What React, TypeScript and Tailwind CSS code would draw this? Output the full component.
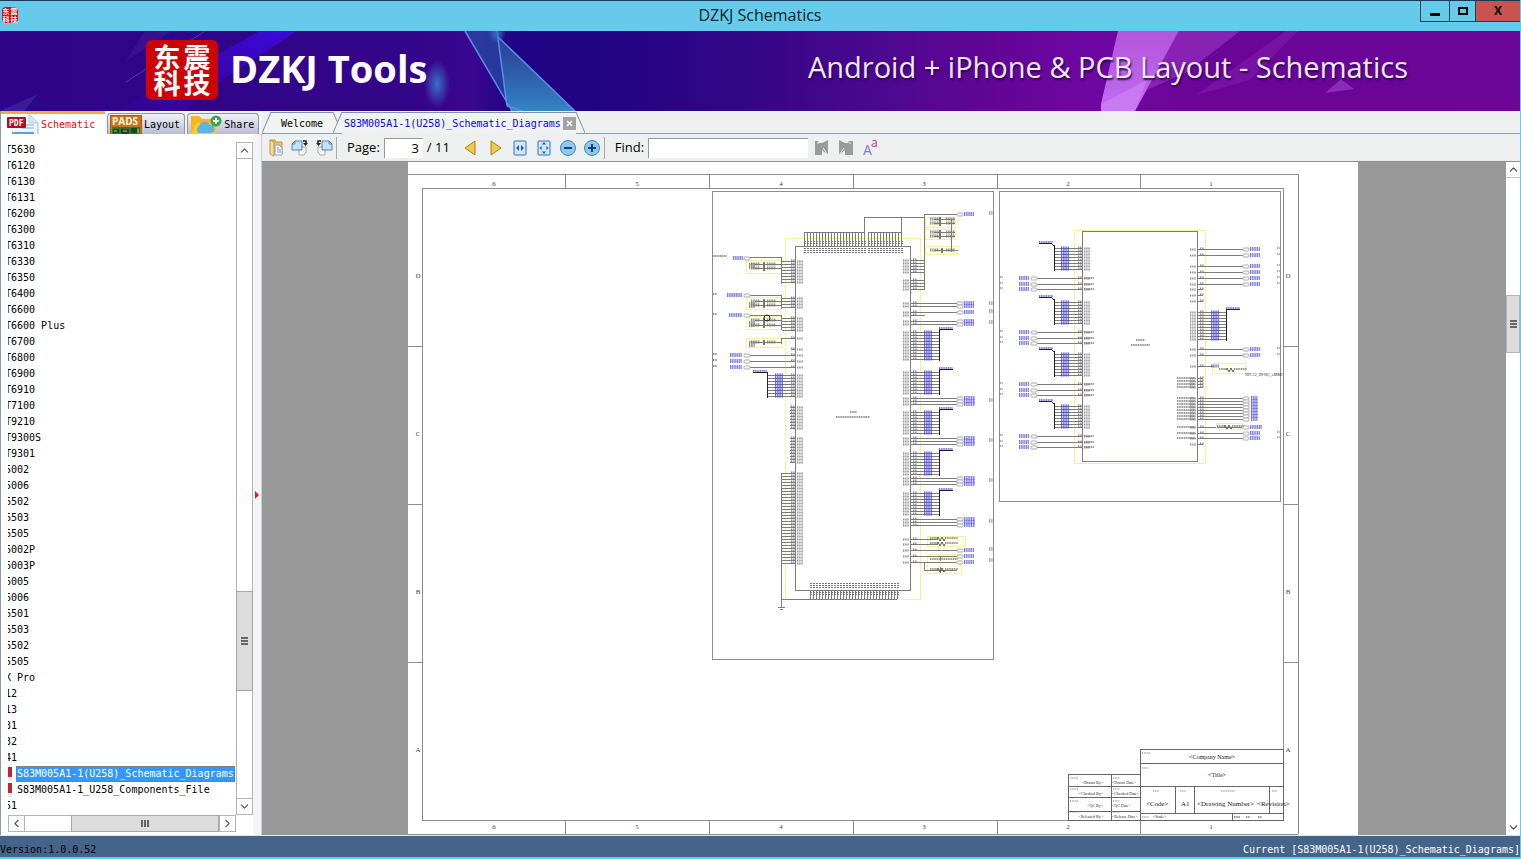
import { useState } from 'react'
import type { ReactNode } from 'react'
import { ChevronDown, ChevronLeft, ChevronRight, ChevronUp } from 'lucide-react'

type TreeRow = { label: string; file?: boolean }

const folders = [
  'T5630', 'T6120', 'T6130', 'T6131', 'T6200', 'T6300', 'T6310', 'T6330', 'T6350', 'T6400', 'T6600',
  'T6600 Plus', 'T6700', 'T6800', 'T6900', 'T6910', 'T7100', 'T9210', 'T9300S', 'T9301', '5002', '5006',
  '6502', '6503', '6505', '6002P', '6003P', '6005', '6006', '6501', '6503', '6502', '5505', 'X Pro', '12',
  '13', '31', '32', '41',
]

const rows: TreeRow[] = [
  ...folders.map((label) => ({ label })),
  { label: 'S83M005A1-1(U258)_Schematic_Diagrams', file: true },
  { label: 'S83M005A1-1_U258_Components_File', file: true },
  { label: '51' },
]

const range = (from: number, count: number, step = 3) =>
  Array.from({ length: count }, (_, i) => from + i * step)

/* ---------- title bar and banner ---------- */

function TitleBar() {
  return (
    <header className="flex h-[31px] shrink-0 items-start border-t border-[#173a56] bg-[#66cbea]">
      <div className="flex w-[100px] items-center pt-1.5 pl-0.5">
        <span className="grid h-4 w-4 grid-cols-2 place-items-center rounded-sm bg-[#c80d10] font-['Noto_Sans_CJK_SC',sans-serif] text-[7px] leading-[8px] font-bold text-white">
          <span>东</span>
          <span>震</span>
          <span>科</span>
          <span>技</span>
        </span>
      </div>
      <h1 className="flex-1 text-center text-base leading-[29px] text-[#10242e]">DZKJ Schematics</h1>
      <div className="flex h-[21px] w-[100px] border-b border-l border-[#1d4256]">
        <button aria-label="Minimize" className="flex w-[29px] items-center justify-center border-r border-[#1d4256] pt-1.5">
          <span className="h-[3px] w-2.5 bg-black" />
        </button>
        <button aria-label="Maximize" className="flex w-[26px] items-center justify-center border-r border-[#1d4256]">
          <span className="h-2 w-2.5 border-2 border-black" />
        </button>
        <button aria-label="Close" className="flex-1 bg-[#c9534f] text-xs font-bold text-black">
          X
        </button>
      </div>
    </header>
  )
}

function Banner() {
  return (
    <div className="relative h-20 shrink-0 overflow-hidden bg-[#6a0597]">
      <svg className="absolute inset-0 h-full w-full" viewBox="0 31 1520 80" preserveAspectRatio="none" aria-hidden="true">
        <defs>
          <linearGradient id="sky" x1="0" x2="1">
            <stop offset="0" stopColor="#2e0488" />
            <stop offset="0.27" stopColor="#330589" />
            <stop offset="0.31" stopColor="#3a0790" />
            <stop offset="0.34" stopColor="#1e0484" />
            <stop offset="0.4" stopColor="#220484" />
            <stop offset="0.5" stopColor="#360688" />
            <stop offset="0.58" stopColor="#4c0890" />
            <stop offset="0.66" stopColor="#640597" />
            <stop offset="0.72" stopColor="#7006a2" />
            <stop offset="0.8" stopColor="#6a0597" />
            <stop offset="1" stopColor="#6b0699" />
          </linearGradient>
          <linearGradient id="beam" x1="1" y1="0" x2="0" y2="1">
            <stop offset="0" stopColor="#3d07e2" />
            <stop offset="1" stopColor="#3a06a0" stopOpacity="0.3" />
          </linearGradient>
          <linearGradient id="shard" x1="0" y1="0" x2="0" y2="1">
            <stop offset="0" stopColor="#2c4a9c" stopOpacity="0.8" />
            <stop offset="1" stopColor="#3485c4" />
          </linearGradient>
          <linearGradient id="pink" x1="0" y1="0" x2="0" y2="1">
            <stop offset="0" stopColor="#b455da" />
            <stop offset="1" stopColor="#c06cf0" />
          </linearGradient>
          <radialGradient id="glow">
            <stop offset="0" stopColor="#3a70c8" />
            <stop offset="1" stopColor="#3a70c8" stopOpacity="0" />
          </radialGradient>
        </defs>
        <rect y="31" width="1520" height="80" fill="url(#sky)" />
        <path d="M260 31H297L208 89L185 111H116Z" fill="url(#beam)" />
        <path d="M145 31H172L126 61Z" fill="#421896" opacity="0.6" />
        <path d="M205 31L126 82" stroke="#6552c4" strokeWidth="1" opacity="0.7" />
        <path d="M0 111L38 94L24 111Z" fill="#4b5bc0" opacity="0.3" />
        <ellipse cx="437" cy="84" rx="13" ry="24" fill="url(#glow)" />
        <path d="M465 31H497L505 97Z" fill="#284fa5" opacity="0.7" />
        <path d="M498 37L575 111H512L505 97Z" fill="url(#shard)" />
        <path d="M465 31L512 111M497 31L507 106M498 37L575 111M507 106L522 111" fill="none" stroke="#5a8fe0" strokeWidth="1.5" />
        <circle cx="497" cy="34" r="9" fill="url(#glow)" />
        <path d="M1118 31H1179L1135 111H1101V104Z" fill="url(#pink)" />
        <path d="M1101 104L1147 80L1135 111H1101Z" fill="#cf86f8" opacity="0.6" />
        <path d="M1178 31H1240L1187 72L1147 90Z" fill="#9c36c4" opacity="0.6" />
        <path d="M1286 31H1298L1250 80L1196 95Z" fill="#8f2cba" opacity="0.35" />
        <path d="M1341 79L1354 89L1325 93Z" fill="#a345cc" opacity="0.6" />
      </svg>
      <div className="relative flex h-full items-center pr-28 pb-0.5 pl-[146px]">
        <div className="grid h-[60px] w-[72px] grid-cols-[28px_28px] content-center justify-center gap-x-0.5 rounded-md bg-[#cc0406] text-center font-['Noto_Sans_CJK_SC',sans-serif] text-[27px] leading-[26px] font-bold text-white">
          <span>东</span>
          <span>震</span>
          <span>科</span>
          <span>技</span>
        </div>
        <p className="ml-3 flex-1 pb-1 text-[38px] leading-none font-bold whitespace-nowrap text-white">DZKJ Tools</p>
        <p className="pb-2 text-[29px] leading-none whitespace-nowrap text-[#f0e8f8] [text-shadow:1px_2px_2px_#2a0450]">
          Android + iPhone &amp; PCB Layout - Schematics
        </p>
      </div>
    </div>
  )
}

/* ---------- scrollbars ---------- */

const scrollButton = 'flex h-[17px] w-[17px] shrink-0 items-center justify-center border border-[#b4b4b4] bg-[#fdfdfd] text-[#555]'

function Grip({ vertical }: { vertical?: boolean }) {
  const bar = vertical ? 'h-0.5 w-[7px] bg-[#666]' : 'h-[7px] w-0.5 bg-[#666]'
  return (
    <span className={vertical ? 'flex flex-col gap-px' : 'flex gap-px'}>
      <span className={bar} />
      <span className={bar} />
      <span className={bar} />
    </span>
  )
}

function TreeScrollY() {
  return (
    <div className="flex w-[17px] flex-col bg-white">
      <button aria-label="Scroll list up" className={scrollButton}>
        <ChevronUp size={13} />
      </button>
      <div className="flex-[433] border-x border-[#b4b4b4]" />
      <div className="flex h-[100px] items-center justify-center border border-[#a6a6a6] bg-[#dcdcdc]">
        <Grip vertical />
      </div>
      <div className="flex-[107] border-x border-[#b4b4b4]" />
      <button aria-label="Scroll list down" className={scrollButton}>
        <ChevronDown size={13} />
      </button>
    </div>
  )
}

function TreeScrollX() {
  return (
    <div className="mr-[26px] flex h-[17px] bg-white">
      <button aria-label="Scroll list left" className={scrollButton}>
        <ChevronLeft size={13} />
      </button>
      <div className="flex-1 border-y border-[#b4b4b4]" />
      <div className="flex w-[148px] items-center justify-center border border-[#a6a6a6] bg-[#dcdcdc]">
        <Grip />
      </div>
      <button aria-label="Scroll list right" className={scrollButton}>
        <ChevronRight size={13} />
      </button>
    </div>
  )
}

/* ---------- left side ---------- */

function PdfIcon() {
  return (
    <svg width="32" height="20" viewBox="0 0 32 20" aria-hidden="true">
      <path d="M5 1h17l9 8v11H5z" fill="#eef5fb" />
      <path d="M22 1l9 8v11" fill="none" stroke="#a9c4dc" strokeWidth="1.2" />
      <path d="M22 1v8h9" fill="#d5e6f4" stroke="#b7cfe2" />
      <path d="M14 11h13M14 14h13" stroke="#b3d4ec" strokeWidth="2" />
      <path d="M5 19h22" stroke="#5ba3d4" strokeWidth="2" />
      <rect x="0" y="3" width="19" height="11" rx="1" fill="#b40d1e" />
      <text x="2" y="12" fontSize="8" fontWeight="700" fill="#fff">PDF</text>
    </svg>
  )
}

function PadsIcon() {
  return (
    <svg width="32" height="19" viewBox="0 0 32 19" className="font-['Open_Sans',sans-serif]" aria-hidden="true">
      <rect width="32" height="19" fill="#b5570f" />
      <rect x="1" y="1" width="30" height="18" fill="#c9721c" />
      <text x="2" y="10" fontSize="10" fontWeight="700" fill="#fff6d8">PADS</text>
      <rect x="2" y="12" width="28" height="7" fill="#2e7a2c" />
      <path d="M3 14h6v4H3zM21 13h6v5h-6z" fill="#154a1c" />
      <path d="M11 14h8v5h-8z" fill="#333" />
      <path d="M13 16h4M28 14v4M4 16h3" stroke="#a6d36a" />
    </svg>
  )
}

function ShareIcon() {
  return (
    <svg width="32" height="19" viewBox="0 0 32 19" aria-hidden="true">
      <path d="M1 1h8l3 3h12v15H1z" fill="#f7b51f" />
      <path d="M6 8h22l-3 11H1z" fill="#ffc928" />
      <path d="M9 18a4 4 0 0 1 0-7a6 6 0 0 1 11-1a4 4 0 0 1 1 8z" fill="#5fb3e6" />
      <circle cx="26" cy="6" r="5.5" fill="#3aa546" />
      <path d="M26 3v6M23 6h6" stroke="#fff" strokeWidth="1.8" />
    </svg>
  )
}

function SideTab({ icon, label, active, onClick }: { icon: ReactNode; label: string; active: boolean; onClick: () => void }) {
  return (
    <button
      role="tab"
      aria-selected={active}
      onClick={onClick}
      className={`flex items-end overflow-hidden whitespace-nowrap ${
        active
          ? 'h-[23px] w-[104px] gap-0.5 border-t-[3px] border-[#f9a83a] bg-white pl-1.5 text-[#e01010]'
          : 'h-[21px] gap-0.5 rounded-t-sm border border-b-0 border-[#8d93a8] bg-gradient-to-b from-[#f2f3f9] to-[#b9bdd4] pr-1 pl-0.5 text-black'
      }`}
    >
      {icon}
      <span className="pb-px leading-4">{label}</span>
    </button>
  )
}

function Sidebar() {
  const [tab, setTab] = useState('Schematic')
  const [selected, setSelected] = useState(rows.length - 3)

  return (
    <aside className="flex w-[262px] shrink-0 flex-col border-l border-[#8c9aa8] bg-white">
      <div role="tablist" className="flex h-[23px] shrink-0 items-end gap-0.5 bg-[#f4f5f6]">
        <SideTab icon={<PdfIcon />} label="Schematic" active={tab === 'Schematic'} onClick={() => setTab('Schematic')} />
        <SideTab icon={<PadsIcon />} label="Layout" active={tab === 'Layout'} onClick={() => setTab('Layout')} />
        <SideTab icon={<ShareIcon />} label="Share" active={tab === 'Share'} onClick={() => setTab('Share')} />
      </div>
      <div className="flex min-h-0 flex-1">
        <div className="flex min-h-0 flex-1 flex-col pt-2 pb-[3px] pl-[7px]">
          <div className="flex min-h-0 flex-1">
            <ul className="min-w-0 flex-1 overflow-hidden">
              {rows.map((row, i) => (
                <li key={i} className="h-4">
                  {row.file ? (
                    <button onClick={() => setSelected(i)} className="flex h-4 items-center gap-1 whitespace-nowrap">
                      <span className="h-3.5 w-1 shrink-0 border-b-4 border-[#d5ebfa] bg-[#c22432]" />
                      <span
                        className={`h-4 border border-dotted leading-[14px] ${
                          selected === i ? 'border-[#cc6600] bg-[#3397fd] text-white' : 'border-transparent'
                        }`}
                      >
                        {row.label}
                      </span>
                    </button>
                  ) : (
                    // the list is scrolled right, so the first character is cut in half
                    <button
                      onClick={() => setSelected(i)}
                      className={`-ml-[3px] block leading-4 whitespace-nowrap ${selected === i ? 'bg-[#3397fd] text-white' : ''}`}
                    >
                      {row.label}
                    </button>
                  )}
                </li>
              ))}
            </ul>
            <TreeScrollY />
            <span className="w-[9px] shrink-0" />
          </div>
          <TreeScrollX />
        </div>
        <div className="-ml-[9px] flex w-[9px] items-center border-r border-[#c6ccd2] bg-[#f3f4f5] pt-5 pl-0.5">
          <span className="border-y-4 border-l-4 border-y-transparent border-l-[#e01818]" />
        </div>
      </div>
    </aside>
  )
}

/* ---------- document tabs and toolbar ---------- */

function Slant({ right }: { right?: boolean }) {
  return (
    <svg width="9" height="21" viewBox="0 0 9 21" className="shrink-0" aria-hidden="true">
      <path d={right ? 'M0 0L9 21H0Z' : 'M9 0L0 21H9Z'} fill="#f1f2f2" />
      <path d={right ? 'M0 0L9 21' : 'M9 0L0 21'} stroke="#7d929f" />
    </svg>
  )
}

function DocTabs() {
  return (
    <div role="tablist" className="flex h-[23px] items-end border-b border-[#8ba0ae] bg-[#eeefef]">
      <div className="flex">
        <Slant />
        <button role="tab" aria-selected={false} className="h-[21px] w-[62px] border-t border-[#7d929f] bg-[#f1f2f2] pt-px leading-5">
          Welcome
        </button>
        <Slant right />
      </div>
      <div className="-ml-[9px] flex">
        <Slant />
        <div className="-mb-px flex h-[22px] items-center gap-0.5 border-t border-[#7d929f] bg-[#f1f2f2] pl-0.5">
          <button role="tab" aria-selected={true} className="leading-5 whitespace-nowrap text-[#0808d8]">
            S83M005A1-1(U258)_Schematic_Diagrams
          </button>
          <button aria-label="Close tab" className="flex h-[13px] w-[13px] items-center justify-center bg-[#a2a2a2]">
            <svg width="7" height="7" viewBox="0 0 7 7" aria-hidden="true">
              <path d="M1 1l5 5M6 1l-5 5" stroke="#fff" strokeWidth="1.6" />
            </svg>
          </button>
        </div>
        <Slant right />
      </div>
    </div>
  )
}

function Tool({ label, width, children }: { label: string; width: number; children: ReactNode }) {
  return (
    <button aria-label={label} className="flex h-6 w-6 shrink-0 items-center justify-center">
      <svg width={width} height="18" viewBox={`0 0 ${width} 18`} aria-hidden="true">
        {children}
      </svg>
    </button>
  )
}

function Toolbar() {
  const [page, setPage] = useState('3')
  const [query, setQuery] = useState('')

  return (
    <div className="flex h-7 shrink-0 items-center border-b border-[#8e8e8e] bg-[#eeefef] pl-0.5 text-[13px] text-black">
      <Tool label="Open" width={16}>
        <path d="M2 1h5l1 2h6v12H4z" fill="#e9bf62" stroke="#c4963e" />
        <path d="M2 1l4 2v14l-4-2z" fill="#f8dc94" stroke="#c4963e" />
        <path d="M7 6h4l3 3v7H7z" fill="#f5f9fd" stroke="#8aa8c4" />
        <path d="M9 9h2M9 11h4M9 13h4" stroke="#7f9fc0" />
      </Tool>
      <Tool label="Rotate left" width={18}>
        <path d="M8 8h7v5l-2 3H8z" fill="#f8f8f8" stroke="#aaa" />
        <path d="M4 2h7v9H1V5z" fill="#c5e0f8" stroke="#5286b8" />
        <path d="M4 2v3H1" fill="none" stroke="#5286b8" />
        <path d="M12 2h3v2" fill="none" stroke="#222" strokeWidth="1.4" />
        <path d="M12 4h5l-2.500 3z" fill="#222" />
      </Tool>
      <Tool label="Rotate right" width={18}>
        <path d="M3 8h7v8H5l-2-3z" fill="#f8f8f8" stroke="#aaa" />
        <path d="M7 2h7l3 3v6H7z" fill="#c5e0f8" stroke="#5286b8" />
        <path d="M14 2v3h3" fill="none" stroke="#5286b8" />
        <path d="M6 2H3v2" fill="none" stroke="#222" strokeWidth="1.4" />
        <path d="M1 4h5L3.500 7z" fill="#222" />
      </Tool>
      <span className="mr-2.5 h-[22px] w-px bg-[#a8a8a8]" />
      <label htmlFor="page">Page:</label>
      <input
        id="page"
        value={page}
        onChange={(e) => setPage(e.target.value)}
        className="ml-1 h-5 w-[39px] border-t border-l border-[#999] bg-white pr-1 text-right outline-none"
      />
      <span className="mx-1 whitespace-nowrap">/ 11</span>
      <span className="w-1" />
      <Tool label="Previous page" width={14}>
        <path d="M12 2v14L2 9z" fill="#f3c94c" stroke="#a87f1c" />
      </Tool>
      <span className="w-0.5" />
      <Tool label="Next page" width={14}>
        <path d="M2 2v14l10-7z" fill="#f3c94c" stroke="#a87f1c" />
      </Tool>
      <Tool label="Fit width" width={14}>
        <rect x="1" y="2" width="12" height="14" rx="1" fill="#cfe6fb" stroke="#2c74bc" />
        <path d="M6 6v6L3 9zM8 6v6l3-3z" fill="#1c5fa8" />
      </Tool>
      <Tool label="Fit page" width={14}>
        <rect x="1" y="2" width="12" height="14" rx="1" fill="#cfe6fb" stroke="#2c74bc" />
        <path d="M7 3l2 2.500H5zM7 15l2-2.500H5zM2.500 9l2-2v4zM11.500 9l-2-2v4z" fill="#1c5fa8" />
      </Tool>
      <Tool label="Zoom out" width={18}>
        <circle cx="9" cy="9" r="7.500" fill="#8ccaf2" stroke="#3f83b8" />
        <path d="M5 9h8" stroke="#123f70" strokeWidth="2" />
      </Tool>
      <Tool label="Zoom in" width={18}>
        <circle cx="9" cy="9" r="7.500" fill="#8ccaf2" stroke="#3f83b8" />
        <path d="M5 9h8M9 5v8" stroke="#123f70" strokeWidth="2" />
      </Tool>
      <span className="mr-2.5 h-[22px] w-px bg-[#a8a8a8]" />
      <label htmlFor="find">Find:</label>
      <input
        id="find"
        value={query}
        onChange={(e) => setQuery(e.target.value)}
        className="mr-0.5 ml-1 h-5 w-40 border-t border-l border-[#999] bg-white px-1 outline-none"
      />
      <Tool label="Find previous" width={16}>
        <path d="M1 2h3l1 2h3l6-3v15l-6-5v5H1z" fill="#9b9b9b" />
        <path d="M9 9l5 7M3 4h2" stroke="#eee" />
      </Tool>
      <Tool label="Find next" width={16}>
        <path d="M1 1l6 3h3l1-2h4v14H7v-5l-6 5z" fill="#9b9b9b" />
        <path d="M6 9l-5 7M11 4h2" stroke="#eee" />
      </Tool>
      <Tool label="Match case" width={16}>
        <text x="1" y="16" fontSize="14" fill="#7a78ea">A</text>
        <text x="9" y="8" fontSize="12" fill="#c02a9c">a</text>
      </Tool>
    </div>
  )
}

/* ---------- schematic sheet ---------- */

const WIRE = '#7c7c7c'
const BLUE = '#5a5ae0'
const YELLOW = '#f6f29a'

// labels are too small to read at this zoom, so they are drawn as broken bars
function Bar({ x, y, w, h = 3, color = '#777' }: { x: number; y: number; w: number; h?: number; color?: string }) {
  return (
    <g stroke={color} shapeRendering="auto">
      <path d={`M${x} ${y}h${w}`} strokeWidth={h} opacity="0.3" />
      <path d={`M${x} ${y}h${w}`} strokeWidth={h} strokeDasharray="1 1.300" opacity="0.7" />
    </g>
  )
}

function Port({ x, y, label, width = 10 }: { x: number; y: number; label: number; width?: number }) {
  return (
    <g>
      <rect x={x} y={y - 1} width="6" height="3" rx="1" fill="#fff" stroke="#aaa" shapeRendering="auto" />
      <Bar x={label} y={y} w={width} h={4} color={BLUE} />
    </g>
  )
}

// dir 1: pins leave the part to the right, -1: to the left
function Pins({ x, ys, len = 14, dir }: { x: number; ys: number[]; len?: number; dir: 1 | -1 }) {
  return (
    <g>
      {ys.map((y) => (
        <g key={y}>
          <path d={`M${x} ${y + 0.5}h${len * dir}`} stroke={WIRE} />
          <Bar x={dir === 1 ? x - 8 : x + 1} y={y + 0.5} w={6} h={2} />
          <Bar x={dir === 1 ? x + 2 : x - 5} y={y - 0.5} w={4} h={2} />
        </g>
      ))}
    </g>
  )
}

function Bus({ edge, x, y, count, dir }: { edge: number; x: number; y: number; count: number; dir: 1 | -1 }) {
  const ys = range(y + 3, count)
  const far = dir === 1 ? x : x - 14
  return (
    <g>
      <Pins x={edge} ys={ys} len={Math.abs(x - edge)} dir={dir} />
      <path d={`M${x + 14 * dir} ${y + 0.5}H${x + 0.5}V${y + count * 3 + 2}`} fill="none" stroke="#222" />
      <Bar x={far} y={y - 1} w={14} h={2} color={BLUE} />
      {ys.map((v) => (
        <Bar key={v} x={dir === 1 ? x - 15 : x + 8} y={v} w={8} h={3} color="#4444dc" />
      ))}
    </g>
  )
}

function Filter({ x, y, w, h, lines }: { x: number; y: number; w: number; h: number; lines: number[] }) {
  return (
    <g>
      <rect x={x + 0.5} y={y + 0.5} width={w} height={h} fill="#fffef0" stroke={YELLOW} />
      {lines.map((v) => (
        <g key={v}>
          <path d={`M${x + 9} ${v + 0.5}H${x + w}`} stroke={WIRE} />
          <Bar x={x + 5} y={v} w={9} h={3} />
          <Bar x={x + 21} y={v} w={9} h={3} />
          <path d={`M${x + w / 2} ${v - 2}v5`} stroke="#777" strokeWidth="2" />
        </g>
      ))}
    </g>
  )
}

function Resistor({ x, y }: { x: number; y: number }) {
  return (
    <g>
      <Bar x={x - 9} y={y - 1} w={7} h={2} />
      <path d={`M${x - 2} ${y}l1 -2l2 4l2 -4l2 4l1 -2`} fill="none" stroke="#555" shapeRendering="auto" />
      <Bar x={x + 6} y={y - 1} w={13} h={2} />
    </g>
  )
}

function SheetFrame() {
  const columns = [494, 637, 781, 924, 1068, 1211]
  const lines = [
    { y: 275, name: 'D' },
    { y: 433, name: 'C' },
    { y: 591, name: 'B' },
    { y: 749, name: 'A' },
  ]
  return (
    <g>
      <g fill="none" stroke="#8c8c8c">
        <path d="M408 174.500H1298.500V834" />
        <rect x="422.500" y="188.500" width="861" height="632" />
        {[565, 709, 853, 997, 1140].map((x) => (
          <path key={x} d={`M${x + 0.5} 175V188M${x + 0.5} 821V834`} />
        ))}
        {[346, 504, 662].map((y) => (
          <path key={y} d={`M408 ${y + 0.5}H422M1284 ${y + 0.5}H1298`} />
        ))}
        <path d="M408 834.500H1298" />
        <rect x="712.500" y="191.500" width="281" height="468" />
        <rect x="999.500" y="191.500" width="281" height="310" />
      </g>
      <g fill="#444" fontSize="7" textAnchor="middle" className="font-['Liberation_Serif',serif]">
        {columns.map((x, i) => (
          <g key={x}>
            <text x={x} y="186">{6 - i}</text>
            <text x={x} y="829">{6 - i}</text>
          </g>
        ))}
        {lines.map(({ y, name }) => (
          <g key={name}>
            <text x="418" y={y + 3}>{name}</text>
            <text x="1288" y={y + 3}>{name}</text>
          </g>
        ))}
      </g>
    </g>
  )
}

function MainChip() {
  return (
    <g>
      <rect x="785.500" y="238.500" width="135" height="361" fill="none" stroke={YELLOW} />
      <rect x="795.500" y="246.500" width="115" height="344" fill="none" stroke={WIRE} />

      {/* top row */}
      {[...range(804, 21), ...range(868, 12)].map((x) => (
        <g key={x}>
          <path d={`M${x + 0.5} 232V246`} stroke={WIRE} />
          <path d={`M${x + 0.5} 248v5M${x + 0.5} 241v4`} stroke="#777" strokeWidth="2" strokeDasharray="1 1" />
        </g>
      ))}
      <path d="M804 232.500H864.500V217.500H924M868 232.500H901.500V217.500M957 214.500H924.500V289" fill="none" stroke={WIRE} />

      {/* bottom row */}
      {range(810, 30).map((x) => (
        <g key={x}>
          <path d={`M${x + 0.5} 590V599`} stroke={WIRE} />
          <path d={`M${x + 0.5} 583v6M${x + 0.5} 592v4`} stroke="#777" strokeWidth="2" strokeDasharray="1 1" />
        </g>
      ))}
      <path d="M781 599.500H897M781.500 473V607M778 607.500h7M780 609.500h3" fill="none" stroke={WIRE} />

      {/* left side */}
      <Filter x={746} y={260} w={35} h={13} lines={[264, 268]} />
      <Filter x={746} y={297} w={35} h={12} lines={[301, 305]} />
      <Filter x={746} y={316} w={35} h={13} lines={[320, 325]} />
      <Filter x={746} y={338} w={35} h={9} lines={[342]} />
      <path d="M750 257.500H781.500V284M750 295.500H781.500V309M750 315.500H781.500V330M781.500 338V344" fill="none" stroke={WIRE} />
      {[262, 301, 320, 340].map((y) => (
        <Bar key={y} x={749} y={y + 4} w={6} h={6} />
      ))}
      <Port x={744} y={258} label={733} />
      <Port x={744} y={295} label={727} width={15} />
      <Port x={744} y={315} label={729} width={13} />
      <circle cx="767" cy="318" r="3" fill="none" stroke="#222" shapeRendering="auto" />
      <Pins x={796} ys={range(261, 8)} dir={-1} />
      <Pins x={796} ys={range(298, 4)} dir={-1} />
      <Pins x={796} ys={range(318, 5)} dir={-1} />
      <Pins x={796} ys={[338]} dir={-1} />
      <Pins x={796} ys={[349]} len={5} dir={-1} />
      <Pins x={796} ys={[355, 361, 367]} len={46} dir={-1} />
      {[355, 361, 367].map((y) => (
        <Port key={y} x={744} y={y} label={730} width={12} />
      ))}
      <Bus edge={796} x={767} y={372} count={8} dir={-1} />
      <Pins x={796} ys={range(407, 8)} len={6} dir={-1} />
      <Pins x={796} ys={range(438, 9)} len={6} dir={-1} />
      <Pins x={796} ys={range(473, 31)} len={15} dir={-1} />

      {/* right side */}
      <Filter x={925} y={217} w={30} h={10} lines={[219, 223]} />
      <Filter x={925} y={229} w={30} h={10} lines={[232, 236]} />
      <Filter x={925} y={246} w={33} h={8} lines={[250]} />
      <path d="M951.500 219V252" stroke={WIRE} />
      <Port x={957} y={214} label={964} />
      <Pins x={911} ys={range(260, 5)} dir={1} />
      <Pins x={911} ys={range(280, 4)} dir={1} />
      <Pins x={911} ys={[303, 306, 312, 321, 324]} len={46} dir={1} />
      <Pins x={911} ys={[315]} dir={1} />
      <Bus edge={911} x={939} y={329} count={10} dir={1} />
      {[369, 409, 450, 490].map((y) => (
        <Bus key={y} edge={911} x={939} y={y} count={8} dir={1} />
      ))}
      {[398, 438, 478, 519].map((y) => (
        <Pins key={y} x={911} ys={range(y, 3)} len={46} dir={1} />
      ))}
      {[303, 306, 312, 321, 324].map((y) => (
        <Port key={y} x={957} y={y} label={964} />
      ))}
      {[398, 438, 478, 519].flatMap((y) => range(y, 3)).map((y) => (
        <Port key={y} x={957} y={y} label={964} width={11} />
      ))}
      <rect x="927.500" y="536.500" width="38" height="10" fill="#fffef0" stroke={YELLOW} />
      <rect x="927.500" y="554.500" width="34" height="19" fill="#fffef0" stroke={YELLOW} />
      <Pins x={911} ys={[539, 544]} len={27} dir={1} />
      <Resistor x={939} y={539} />
      <Resistor x={939} y={544} />
      <Pins x={911} ys={[550, 556, 562]} len={46} dir={1} />
      {[550, 556, 562].map((y) => (
        <Port key={y} x={957} y={y} label={964} />
      ))}
      <Bar x={930} y={559} w={28} h={2} />
      <path d="M924.500 562V570.500H957M940.500 556v5M940.500 567v6" fill="none" stroke={WIRE} />
      <Resistor x={939} y={570} />

      <Bar x={850} y={412} w={7} h={2} />
      <Bar x={836} y={417} w={34} h={2} />
      <Bar x={713} y={256} w={14} h={2} />
      {[294, 314, 354, 360, 366].map((y) => (
        <Bar key={y} x={713} y={y} w={4} h={2} />
      ))}
      {[213, 303, 311, 322, 400, 440, 480, 521, 549, 560].map((y) => (
        <Bar key={y} x={989} y={y} w={4} h={4} color="#999" />
      ))}
    </g>
  )
}

function MemoryChip() {
  const outputs = [249, 255, 266, 272, 278, 284, 349, 355, 433, 438]
  return (
    <g>
      <rect x="1074.500" y="230.500" width="131" height="233" fill="none" stroke={YELLOW} />
      <rect x="1082.500" y="231.500" width="115" height="230" fill="none" stroke={WIRE} />

      {[243, 297, 349, 401].map((y) => (
        <g key={y}>
          <Pins x={1083} ys={range(y + 5, 8)} len={29} dir={-1} />
          <path d={`M1039 ${y + 0.5}H1051L1054.500 ${y + 3}V${y + 28}`} fill="none" stroke="#222" />
          <Bar x={1039} y={y - 1} w={14} h={2} color={BLUE} />
          {range(y + 5, 8).map((v) => (
            <Bar key={v} x={1061} y={v} w={8} color="#4444dc" />
          ))}
          {[35, 41, 46].map((d) => (
            <g key={d}>
              <Pins x={1083} ys={[y + d]} len={46} dir={-1} />
              <Bar x={1084} y={y + d} w={10} h={2} />
              <Port x={1031} y={y + d} label={1019} />
              <Bar x={1000} y={y + d - 1} w={3} h={2} color="#999" />
            </g>
          ))}
        </g>
      ))}

      <Pins x={1198} ys={outputs} len={46} dir={1} />
      {outputs.map((y) => (
        <g key={y}>
          <Port x={1243} y={y} label={1250} />
          <Bar x={1277} y={y - 1} w={3} h={2} color="#999" />
        </g>
      ))}
      <Pins x={1198} ys={[289, 295, 301, 444]} len={5} dir={1} />
      <Bus edge={1198} x={1226} y={309} count={10} dir={1} />
      <rect x="1212.500" y="363.500" width="33" height="10" fill="#fffef0" stroke={YELLOW} />
      <Pins x={1198} ys={[366]} len={16} dir={1} />
      <Bar x={1211} y={366} w={8} color={BLUE} />
      <Resistor x={1228} y={370} />
      <text x="1245" y="376" fontSize="4" fill="#222" className="font-['Liberation_Serif',serif]">
        NFC12_HI-HC, eMMC
      </text>
      <Pins x={1198} ys={range(378, 4)} len={5} dir={1} />
      <Pins x={1198} ys={range(398, 8)} len={46} dir={1} />
      {range(398, 8).map((y) => (
        <Port key={y} x={1243} y={y} label={1251} width={7} />
      ))}
      {[...range(378, 4), ...range(398, 8), 427, 433, 438].map((y) => (
        <Bar key={y} x={1177} y={y} w={18} h={2} />
      ))}
      <Pins x={1198} ys={[427]} len={46} dir={1} />
      <rect x="1216.500" y="423.500" width="26" height="6" fill="none" stroke={YELLOW} />
      <Resistor x={1226} y={427} />
      <Port x={1243} y={427} label={1250} width={12} />
      <Bar x={1136} y={340} w={9} h={2} />
      <Bar x={1131} y={345} w={19} h={2} />
    </g>
  )
}

function TitleBlock() {
  const signatures = [
    { y: 784, by: '<Drawn By>', date: '<Drawn Date>' },
    { y: 795, by: '<Checked By>', date: '<Checked Date>' },
    { y: 807, by: '<QC By>', date: '<QC Date>' },
    { y: 818, by: '<Released By>', date: '<Release Date>' },
  ]
  return (
    <g className="font-['Liberation_Serif',serif]" fill="#222">
      <g fill="none" stroke="#666">
        <rect x="1140.500" y="749.500" width="143" height="71" />
        <path d="M1140 763.500H1284M1140 786.500H1284M1140 813.500H1284M1175.500 786V813M1194.500 786V813M1269.500 786V813M1232.500 813V820" />
        <rect x="1068.500" y="774.500" width="72" height="46" />
        <path d="M1111.500 774V820M1068 786.500H1140M1068 797.500H1140M1068 811.500H1140" />
      </g>
      <g fontSize="6" textAnchor="middle">
        <text x="1212" y="759">&lt;Company Name&gt;</text>
        <text x="1217" y="777">&lt;Title&gt;</text>
      </g>
      <g fontSize="7">
        <text x="1146" y="806">&lt;Code&gt;</text>
        <text x="1181" y="806">A1</text>
        <text x="1197" y="806">&lt;Drawing Number&gt;</text>
        <text x="1257" y="806">&lt;Revision&gt;</text>
      </g>
      <g fontSize="4">
        {signatures.map((s) => (
          <g key={s.y}>
            <text x="1103" y={s.y} textAnchor="end">{s.by}</text>
            <text x="1112" y={s.y}>{s.date}</text>
            <Bar x={1070} y={s.y - 6} w={8} h={1} />
            <Bar x={1113} y={s.y - 6} w={7} h={1} />
          </g>
        ))}
        <text x="1153" y="818">&lt;Scale&gt;</text>
      </g>
      <Bar x={1142} y={753} w={8} h={1} />
      <Bar x={1142} y={768} w={6} h={1} />
      <Bar x={1153} y={791} w={6} h={1} />
      <Bar x={1180} y={791} w={6} h={1} />
      <Bar x={1221} y={791} w={14} h={1} />
      <Bar x={1272} y={791} w={5} h={1} />
      <Bar x={1142} y={817} w={7} h={1} />
      <Bar x={1234} y={817} w={6} h={2} />
      <Bar x={1246} y={817} w={4} h={2} />
      <Bar x={1258} y={817} w={4} h={2} />
    </g>
  )
}

function Viewer() {
  return (
    <div className="flex min-h-0 flex-1">
      <div className="flex min-w-0 flex-1 justify-center overflow-hidden bg-[#999] pr-0.5">
        <svg
          width="950"
          height="673"
          viewBox="408 162 950 673"
          className="shrink-0 bg-white"
          shapeRendering="crispEdges"
          role="img"
          aria-label="Schematic page 3"
        >
          <SheetFrame />
          <MainChip />
          <MemoryChip />
          <TitleBlock />
        </svg>
      </div>
      <div className="flex w-3.5 shrink-0 flex-col bg-white text-[#444]">
        <button aria-label="Scroll page up" className="flex h-4 items-center justify-center border-b border-[#c4c4c4]">
          <ChevronUp size={13} />
        </button>
        <div className="flex-[117]" />
        <div className="flex h-[58px] items-center justify-center border border-[#b4b4b4] bg-[#dcdcdc]">
          <Grip vertical />
        </div>
        <div className="flex-[466]" />
        <button aria-label="Scroll page down" className="flex h-4 items-center justify-center">
          <ChevronDown size={13} />
        </button>
      </div>
    </div>
  )
}

export default function App() {
  return (
    <div className="flex h-screen flex-col overflow-hidden border-r border-b-2 border-[#66cbea] bg-[#eeefef] font-['Open_Sans',sans-serif]">
      <TitleBar />
      <Banner />
      <div className="flex min-h-0 flex-1 font-['DejaVu_Sans_Mono',monospace] text-[10px] text-black">
        <Sidebar />
        <main className="flex min-w-0 flex-1 flex-col">
          <DocTabs />
          <div className="flex min-h-0 flex-1 flex-col font-['Open_Sans',sans-serif]">
            <Toolbar />
            <Viewer />
          </div>
        </main>
      </div>
      <footer className="flex h-[22px] shrink-0 items-center justify-between border-t border-[#dfe6ec] bg-[#456489] pt-1.5 font-['DejaVu_Sans_Mono',monospace] text-[10px] leading-4 text-white">
        <span className="text-black">Version:1.0.0.52</span>
        <span>Current [S83M005A1-1(U258)_Schematic_Diagrams]</span>
      </footer>
    </div>
  )
}
